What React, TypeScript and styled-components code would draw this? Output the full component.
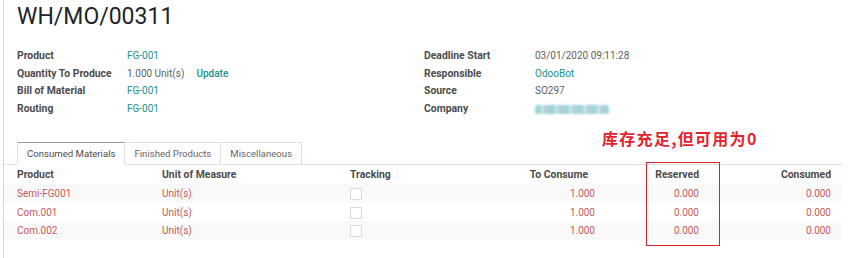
import React from 'react';
import styled, {createGlobalStyle} from "styled-components";

const GlobalStyle = createGlobalStyle`
  body {
    margin: 0;
    background: #fff;
    font-family: Roboto, "Liberation Sans", sans-serif;
  }
`
const Sheet = styled.div`
  position: relative;
  width: 838px;
  height: 258px;
  margin-left: 3px;
  border-left: 1px solid #d8d8d8;
`
const Title = styled.h1`
  margin: 0;
  padding: 2px 0 0 13px;
  font-size: 23px;
  font-weight: 400;
  line-height: 29px;
  color: #212529;
`
const Fields = styled.div`
  display: grid;
  grid-template-columns: 407px 1fr;
  padding: 16px 0 0 13px;
`
const FieldGroup = styled.div<{ $labelWidth: number }>`
  display: grid;
  grid-template-columns: ${p => p.$labelWidth}px 1fr;
  grid-auto-rows: 17.6px;
  align-items: center;
  font-size: 10px;
`
const Label = styled.div`
  font-weight: 700;
  font-size: 10.4px;
  color: #4c4c4c;
`
const Value = styled.div<{ $link?: boolean }>`
  color: ${p => p.$link ? '#21908d' : '#5f5f5f'};
  white-space: nowrap;
`
const UpdateLink = styled.span`
  margin-left: 12px;
  color: #21908d;
  font-weight: 500;
`
const Blurred = styled.span`
  display: inline-block;
  width: 74px;
  height: 9px;
  margin-top: 3px;
  border-radius: 2px;
  background: repeating-linear-gradient(90deg, #9dd6d6 0 6px, #c8e6e8 6px 9px, #b3cfd8 9px 14px);
  filter: blur(1.2px);
`
const Annotation = styled.div`
  position: absolute;
  left: 598px;
  top: 126px;
  font-family: "Noto Sans CJK SC", serif;
  font-size: 16px;
  font-weight: 700;
  letter-spacing: 1.3px;
  color: #e5222c;
`
const RedBox = styled.div`
  position: absolute;
  left: 642px;
  top: 162px;
  width: 72px;
  height: 82px;
  border: 1px solid #d8232a;
`
const Tabs = styled.div`
  display: flex;
  margin-top: 25px;
  padding-left: 13px;
  border-bottom: 1px solid #dee2e6;
  height: 22px;
`
const Tab = styled.div<{ $active?: boolean }>`
  display: flex;
  align-items: center;
  padding: 0 9px;
  margin-bottom: -1px;
  font-size: 9.6px;
  color: ${p => p.$active ? '#4c4c4c' : '#666'};
  border: 1px solid #dee2e6;
  border-left-width: ${p => p.$active ? '1px' : '0'};
  border-top-color: ${p => p.$active ? '#9a96b8' : '#dee2e6'};
  border-bottom-color: ${p => p.$active ? '#fff' : '#dee2e6'};
  background: #fff;
`
const Table = styled.table`
  width: 838px;
  border-collapse: collapse;
  table-layout: fixed;
  font-size: 10px;
`
const HeadRow = styled.tr`
  height: 19px;
  box-shadow: 0 2px 3px -1px rgba(0, 0, 0, 0.08);
`
const Th = styled.th<{ $align?: string; $pl?: number; $pr?: number }>`
  padding: 0 ${p => p.$pr ?? 0}px 0 ${p => p.$pl ?? 0}px;
  text-align: ${p => p.$align ?? 'left'};
  font-weight: 700;
  font-size: 10.4px;
  color: #4c4c4c;
  white-space: nowrap;
`
const Row = styled.tr<{ $striped?: boolean }>`
  height: 18.5px;
  background: ${p => p.$striped ? '#f9f9f9' : '#fff'};
`
const Td = styled.td<{ $align?: string; $pl?: number; $pr?: number }>`
  padding: 0 ${p => p.$pr ?? 0}px 0 ${p => p.$pl ?? 0}px;
  text-align: ${p => p.$align ?? 'left'};
  color: #c65b5b;
  white-space: nowrap;
`
const CheckBox = styled.span`
  display: inline-block;
  width: 10px;
  height: 10px;
  margin-top: 3px;
  border: 1px solid #d9d9d9;
  background: #fff;
`

const lines = [
    {product: 'Semi-FG001', uom: 'Unit(s)', toConsume: '1.000', reserved: '0.000', consumed: '0.000'},
    {product: 'Com.001', uom: 'Unit(s)', toConsume: '1.000', reserved: '0.000', consumed: '0.000'},
    {product: 'Com.002', uom: 'Unit(s)', toConsume: '1.000', reserved: '0.000', consumed: '0.000'},
]

const App = () => {
    return (
        <>
            <GlobalStyle/>
            <Sheet>
                <Title>WH/MO/00311</Title>
                <Fields>
                    <FieldGroup $labelWidth={110}>
                        <Label>Product</Label>
                        <Value $link>FG-001</Value>
                        <Label>Quantity To Produce</Label>
                        <Value>1.000 Unit(s)<UpdateLink>Update</UpdateLink></Value>
                        <Label>Bill of Material</Label>
                        <Value $link>FG-001</Value>
                        <Label>Routing</Label>
                        <Value $link>FG-001</Value>
                    </FieldGroup>
                    <FieldGroup $labelWidth={111}>
                        <Label>Deadline Start</Label>
                        <Value>03/01/2020 09:11:28</Value>
                        <Label>Responsible</Label>
                        <Value $link>OdooBot</Value>
                        <Label>Source</Label>
                        <Value>SO297</Value>
                        <Label>Company</Label>
                        <Value><Blurred/></Value>
                    </FieldGroup>
                </Fields>

                <Tabs>
                    <Tab $active>Consumed Materials</Tab>
                    <Tab>Finished Products</Tab>
                    <Tab>Miscellaneous</Tab>
                </Tabs>

                <Table>
                    <colgroup>
                        <col style={{width: 158}}/>
                        <col style={{width: 188}}/>
                        <col style={{width: 104}}/>
                        <col style={{width: 150}}/>
                        <col style={{width: 105}}/>
                        <col style={{width: 133}}/>
                    </colgroup>
                    <thead>
                    <HeadRow>
                        <Th $pl={13}>Product</Th>
                        <Th>Unit of Measure</Th>
                        <Th>Tracking</Th>
                        <Th $align="right" $pr={16}>To Consume</Th>
                        <Th $align="right" $pr={10}>Reserved</Th>
                        <Th $align="right" $pr={11}>Consumed</Th>
                    </HeadRow>
                    </thead>
                    <tbody>
                    {lines.map((line, i) =>
                        <Row key={line.product} $striped={i % 2 === 0}>
                            <Td $pl={13}>{line.product}</Td>
                            <Td>{line.uom}</Td>
                            <Td><CheckBox/></Td>
                            <Td $align="right" $pr={9}>{line.toConsume}</Td>
                            <Td $align="right" $pr={10}>{line.reserved}</Td>
                            <Td $align="right" $pr={11}>{line.consumed}</Td>
                        </Row>
                    )}
                    </tbody>
                </Table>

                <Annotation>库存充足,但可用为0</Annotation>
                <RedBox/>
            </Sheet>
        </>
    );
};

export default App;
